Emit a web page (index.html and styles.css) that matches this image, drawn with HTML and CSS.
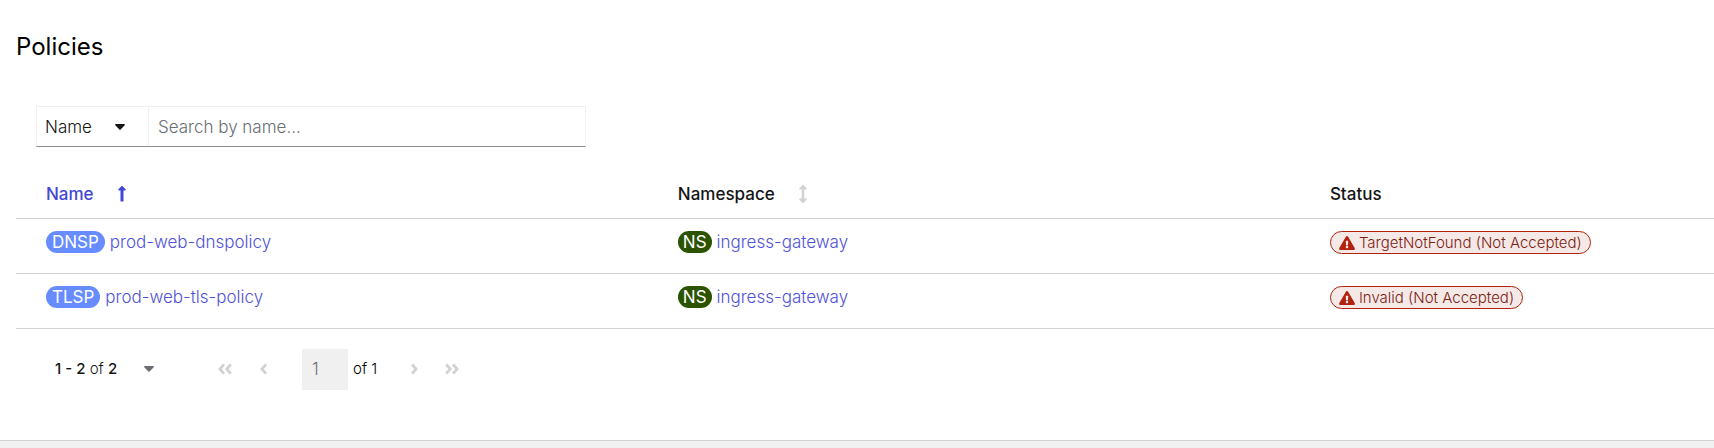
FILE: index.html
```html
<!DOCTYPE html>
<html lang="en">
<head>
<meta charset="utf-8">
<meta name="viewport" content="width=device-width, initial-scale=1">
<title>Policies</title>
<link rel="stylesheet" href="styles.css">
</head>
<body>
<svg class="defs" aria-hidden="true">
  <symbol id="caret" viewBox="0 0 10 6"><path d="M0.8 0h8.4c.7 0 1 .8.5 1.3L5.6 5.5c-.3.3-.9.3-1.2 0L.3 1.300C-.2.8.1 0 .8 0z"/></symbol>
  <symbol id="warning" viewBox="0 0 576 512"><path d="M569.500 440C588 472 564.800 512 527.900 512H48.100c-36.900 0-60-40.100-41.600-72L246.400 24c18.500-32 64.700-32 83.200 0l239.900 416zM288 354c-25.400 0-46 20.600-46 46s20.600 46 46 46 46-20.600 46-46-20.600-46-46-46zm-43.700-165.300l7.400 136c.3 6.400 5.600 11.300 12 11.300h48.500c6.400 0 11.600-5 12-11.300l7.400-136c.4-6.900-5.100-12.700-12-12.700h-63.400c-6.900 0-12.400 5.800-12 12.700z"/></symbol>
  <symbol id="angle" viewBox="0 0 7 12"><path d="M6 1.300L1.900 6 6 10.700" fill="none" stroke="currentColor" stroke-width="2.800"/></symbol>
  <symbol id="double-angle" viewBox="0 0 14 12"><path d="M6 1.300L1.900 6 6 10.700M12.800 1.300L8.700 6l4.100 4.700" fill="none" stroke="currentColor" stroke-width="2.800"/></symbol>
</svg>
<main class="panel">
  <h1 class="title">Policies</h1>
  <form class="toolbar">
    <div class="filter">
      <select class="filter-select" aria-label="Filter by"><option>Name</option></select>
      <svg class="filter-caret" aria-hidden="true"><use href="#caret"/></svg>
    </div>
    <input class="search" type="text" aria-label="Search by name" placeholder="Search by name...">
  </form>
  <table class="table">
    <thead>
      <tr>
        <th class="col-name" scope="col" aria-sort="ascending"><button class="sort sort-active" type="button">Name
          <svg class="sort-icon" viewBox="0 0 8 18" aria-hidden="true"><path d="M2.500 16.500V5.500H1C.2 5.500-.1 4.700.4 4.200L3.400 1.200c.3-.3.900-.3 1.200 0l3 3c.5.5.2 1.300-.6 1.300H5.500v11z"/></svg></button></th>
        <th class="col-namespace" scope="col"><button class="sort" type="button">Namespace
          <svg class="sort-icon" viewBox="0 0 8 18" aria-hidden="true"><path d="M2.700 13.500v-9H1C.2 4.500-.1 3.700.4 3.200L3.400.2c.3-.3.900-.3 1.200 0l3 3c.5.5.2 1.300-.6 1.300H5.300v9H7c.8 0 1.100.8.6 1.300l-3 3c-.3.3-.9.3-1.200 0l-3-3c-.5-.5-.2-1.300.6-1.300z"/></svg></button></th>
        <th scope="col">Status</th>
      </tr>
    </thead>
    <tbody>
      <tr>
        <td><span class="resource"><span class="badge badge-policy">DNSP</span><a href="#dns">prod-web-dnspolicy</a></span></td>
        <td><span class="resource"><span class="badge badge-ns">NS</span><a href="#gateway">ingress-gateway</a></span></td>
        <td><span class="label"><svg class="label-icon" aria-hidden="true"><use href="#warning"/></svg>TargetNotFound (Not Accepted)</span></td>
      </tr>
      <tr>
        <td><span class="resource"><span class="badge badge-policy">TLSP</span><a href="#tls">prod-web-tls-policy</a></span></td>
        <td><span class="resource"><span class="badge badge-ns">NS</span><a href="#gateway">ingress-gateway</a></span></td>
        <td><span class="label"><svg class="label-icon" aria-hidden="true"><use href="#warning"/></svg>Invalid (Not Accepted)</span></td>
      </tr>
    </tbody>
  </table>
  <nav class="pagination" aria-label="Pagination">
    <button class="range" type="button"><span><b>1 - 2</b> of <b>2</b></span><svg class="range-caret" aria-hidden="true"><use href="#caret"/></svg></button>
    <div class="pager">
      <button class="page-button" type="button" aria-label="First page" disabled><svg class="double" aria-hidden="true"><use href="#double-angle"/></svg></button>
      <button class="page-button" type="button" aria-label="Previous page" disabled><svg class="single" aria-hidden="true"><use href="#angle"/></svg></button>
      <div class="page-entry"><input class="page-input" type="text" aria-label="Current page" value="1" disabled><span>of 1</span></div>
      <button class="page-button" type="button" aria-label="Next page" disabled><svg class="single flip" aria-hidden="true"><use href="#angle"/></svg></button>
      <button class="page-button" type="button" aria-label="Last page" disabled><svg class="double flip" aria-hidden="true"><use href="#double-angle"/></svg></button>
    </div>
  </nav>
</main>
</body>
</html>
```
FILE: styles.css
```css
* { box-sizing: border-box; }
body {
  margin: 0;
  background: #f0f0f0;
  color: #151515;
  font: 300 17px/24px Inter, "Liberation Sans", sans-serif;
}
button, input, select { font: inherit; color: inherit; border: 0; border-radius: 0; background: none; padding: 0; margin: 0; }
svg { display: block; fill: currentColor; }
a { color: #4f52d9; text-decoration: none; }
a:hover { text-decoration: underline; }
.defs { display: none; }
.panel {
  padding: 31px 0 50px 16px;
  background: #fff;
  box-shadow: 0 1px 3px #00000033;
  border-bottom: 1px solid #d2d2d2;
}
.title { margin: 0; color: #000; font-size: 24px; line-height: 32px; font-weight: 400; }
.toolbar {
  display: flex;
  width: 550px;
  max-width: calc(100% - 36px);
  height: 41px;
  margin: 43px 0 0 20px;
  border: 1px solid #f0f0f0;
  border-bottom-color: #8a8d90;
}
.filter { display: grid; width: 112px; align-items: center; border-right: 1px solid #f0f0f0; }
.filter-select { grid-area: 1 / 1; height: 100%; padding: 0 36px 0 8px; appearance: none; }
.filter-caret { grid-area: 1 / 1; justify-self: end; width: 10px; height: 6px; margin-right: 23px; pointer-events: none; }
.search { flex: 1; min-width: 0; padding: 0 9px; }
.search::placeholder { color: #6a6e73; opacity: 1; }
.table { width: 100%; margin-top: 24px; border-collapse: collapse; table-layout: fixed; }
.col-name { width: 37.8%; }
.col-namespace { width: 38.4%; }
th, td { padding: 0 0 0 20px; text-align: left; border-bottom: 1px solid #d2d2d2; }
th:first-child, td:first-child { padding-left: 30px; }
th { height: 47px; font-weight: 500; font-size: 17px; }
td { height: 55px; padding-bottom: 7px; }
.sort { display: flex; align-items: center; gap: 24px; cursor: pointer; }
.sort-active, .sort-active .sort-icon { color: #4347d6; }
.sort-icon { width: 8px; height: 18px; color: #d2d2d2; }
.resource { display: flex; align-items: center; gap: 5px; }
.badge { padding: 0 5px; border-radius: 20px; color: #fff; line-height: 22px; font-weight: 400; }
.badge-policy { padding: 0 6px; background: #668cff; }
.badge-ns { background: #2b5300; }
.label {
  display: inline-flex;
  align-items: center;
  gap: 4px;
  padding: 0 8px;
  border: 1px solid #b1230f;
  border-radius: 20px;
  background: #f5e9e7;
  color: #7d2012;
  font-size: 15px;
  line-height: 21px;
  vertical-align: middle;
}
.label-icon { width: 16px; height: 14px; color: #b1230f; }
.pagination { display: flex; align-items: center; margin-top: 20px; padding-left: 39px; font-size: 15px; }
.pagination b { font-weight: 500; }
.range { display: flex; align-items: center; justify-content: space-between; width: 99px; }
.range-caret { width: 10px; height: 6px; color: #6a6e73; }
.pager { display: flex; align-items: center; margin-left: 52px; }
.page-button { display: grid; place-items: center; width: 38px; height: 38px; color: #d2d2d2; }
.double { width: 14px; height: 12px; }
.single { width: 7px; height: 12px; }
.flip { transform: scaleX(-1); }
.page-entry { display: flex; align-items: center; gap: 5px; margin: 0 18px 0 20px; color: #000; }
.page-input { width: 46px; height: 41px; padding: 0 10px; background: #f0f0f0; color: #6a6e73; font-size: 17px; }
```
